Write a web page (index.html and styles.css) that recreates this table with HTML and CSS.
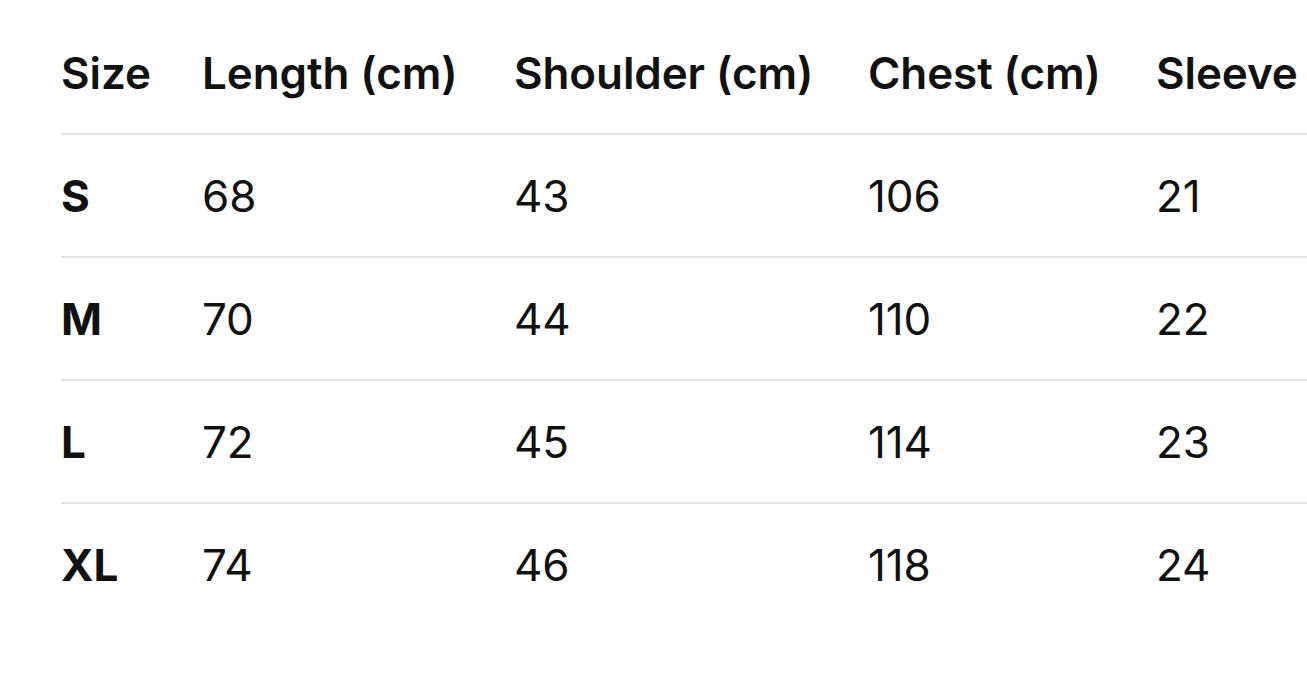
FILE: index.html
```html
<!DOCTYPE html>
<html>
<head>
<meta charset="utf-8">
<link rel="stylesheet" href="styles.css">
</head>
<body>
<div class="wrap">
<table class="sizes">
  <colgroup>
    <col class="c-size"><col class="c-length"><col class="c-shoulder"><col class="c-chest"><col class="c-sleeve">
  </colgroup>
  <thead>
    <tr><th>Size</th><th>Length (cm)</th><th>Shoulder (cm)</th><th>Chest (cm)</th><th>Sleeve</th></tr>
  </thead>
  <tbody>
    <tr><td class="sz">S</td><td>68</td><td>43</td><td>106</td><td>21</td></tr>
    <tr><td class="sz">M</td><td>70</td><td>44</td><td>110</td><td>22</td></tr>
    <tr><td class="sz">L</td><td>72</td><td>45</td><td>114</td><td>23</td></tr>
    <tr class="last"><td class="sz">XL</td><td>74</td><td>46</td><td>118</td><td>24</td></tr>
  </tbody>
</table>
</div>
</body>
</html>
```
FILE: styles.css
```css
html, body {
  margin: 0;
  padding: 0;
  background: #ffffff;
  overflow: hidden;
}
body {
  width: 1307px;
  height: 699px;
  font-family: Inter, "Liberation Sans", sans-serif;
  color: #111111;
}
.wrap {
  padding: 12px 0 0 61px;
}
.sizes {
  border-collapse: collapse;
  table-layout: fixed;
  width: 1246px;
}
.c-size { width: 141px; }
.c-length { width: 312px; }
.c-shoulder { width: 354px; }
.c-chest { width: 288px; }
.c-sleeve { width: 151px; }
.sizes th, .sizes td {
  height: 121px;
  padding: 0;
  text-align: left;
  vertical-align: middle;
  font-size: 44px;
  white-space: nowrap;
  border-bottom: 2px solid #e3e3e3;
  letter-spacing: -0.1px;
}
.sizes th {
  font-weight: 600;
}
.sizes td {
  font-weight: 400;
}
.sizes td.sz {
  font-weight: 700;
}
.sizes tr.last td {
  border-bottom: none;
}
```
